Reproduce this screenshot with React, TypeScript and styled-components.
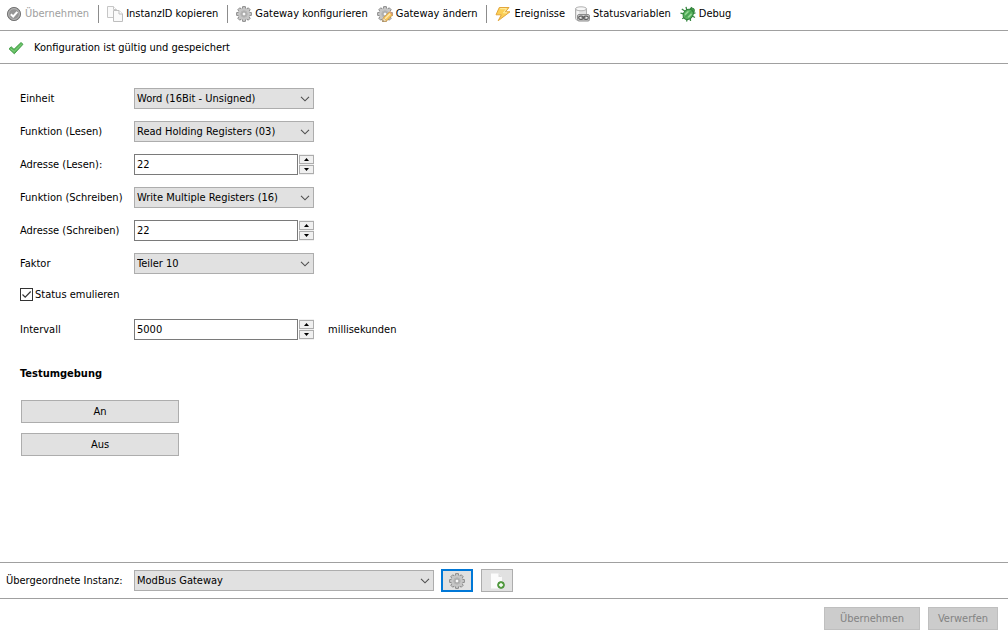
import React from "react";
import styled, { createGlobalStyle, css } from "styled-components";

const GlobalStyle = createGlobalStyle`
  *, *::before, *::after { box-sizing: border-box; }
  body {
    margin: 0;
    background: #ffffff;
    color: #000000;
  }
  body, button, input, select {
    font-family: "DejaVu Sans Condensed", Tahoma, sans-serif;
    font-size: 11px;
    line-height: 16px;
  }
`;

const Page = styled.div`
  display: flex;
  flex-direction: column;
  min-height: 100vh;
`;

const Toolbar = styled.nav`
  display: flex;
  align-items: center;
  gap: 9px;
  height: 31px;
  padding: 0 6px 2px;
  border-bottom: 1px solid #a0a0a0;
`;

const ToolButton = styled.button`
  display: flex;
  align-items: center;
  gap: 3px;
  padding: 0;
  border: 0;
  background: none;
  color: #000000;
  white-space: nowrap;

  &:disabled { color: #a0a0a0; }
  svg { flex: none; }
`;

const Divider = styled.span`
  width: 1px;
  height: 18px;
  margin-right: -1px;
  background: #8c8c8c;
`;

const StatusBar = styled.div`
  display: flex;
  align-items: center;
  gap: 10px;
  height: 33px;
  padding: 2px 8px 0;
  border-bottom: 1px solid #a0a0a0;
`;

const Form = styled.main`
  flex: 1;
  padding: 18px 20px;
`;

const Row = styled.div`
  display: flex;
  align-items: center;
  height: 33px;
`;

const RowLabel = styled.label`
  width: 114px;
  white-space: nowrap;
`;

const SelectBox = styled.span<{ $wide?: boolean }>`
  position: relative;
  display: flex;
  width: ${({ $wide }) => ($wide ? 300 : 180)}px;

  select {
    width: 100%;
    height: 21px;
    padding: 1px 22px 0 2px;
    border: 1px solid #adadad;
    border-radius: 0;
    background: #e1e1e1;
    color: #000000;
    line-height: 18px;
    appearance: none;
  }
  svg {
    position: absolute;
    top: 8px;
    right: 4px;
    pointer-events: none;
  }
`;

const NumberBox = styled.span`
  display: flex;
  gap: 1px;
  width: 180px;

  input {
    flex: 1;
    min-width: 0;
    height: 21px;
    padding: 0 2px;
    border: 1px solid #7a7a7a;
    background: #ffffff;
    color: #000000;
    appearance: textfield;
  }
  input::-webkit-inner-spin-button { appearance: none; }
`;

const Stepper = styled.span`
  display: flex;
  flex-direction: column;
  justify-content: center;
  gap: 1px;
  width: 15px;
  background: #f0f0f0;
`;

const StepButton = styled.button`
  display: flex;
  align-items: center;
  justify-content: center;
  height: 9px;
  padding: 0;
  border: 1px solid #adadad;
  background: #f0f0f0;
`;

const Unit = styled.span`
  margin-left: 14px;
`;

const CheckRow = styled.label`
  display: flex;
  align-items: center;
  gap: 2px;
  height: 33px;
  padding-bottom: 4px;
`;

const CheckMark = styled.span`
  position: relative;
  display: flex;

  input {
    width: 13px;
    height: 13px;
    margin: 0;
    border: 1px solid #333333;
    background: #ffffff;
    appearance: none;
  }
  svg {
    position: absolute;
    inset: 0;
    pointer-events: none;
    visibility: hidden;
  }
  input:checked + svg { visibility: visible; }
`;

const SectionTitle = styled.h2`
  margin: 20px 0 18px;
  font-size: 11px;
  line-height: 16px;
`;

const Actions = styled.div`
  display: flex;
  flex-direction: column;
  gap: 10px;
  padding-left: 1px;
`;

const pushButton = css`
  height: 23px;
  padding: 1px 0 0;
  border: 1px solid #adadad;
  background: #e1e1e1;
  color: #000000;

  &:disabled {
    border-color: #bfbfbf;
    background: #cccccc;
    color: #838383;
  }
`;

const PushButton = styled.button<{ $width: number }>`
  ${pushButton}
  width: ${({ $width }) => $width}px;
`;

const IconButton = styled.button<{ $focused?: boolean }>`
  ${pushButton}
  display: flex;
  align-items: center;
  justify-content: center;
  width: 32px;
  padding: 0;
  ${({ $focused }) => $focused && css`border: 2px solid #0078d7;`}
`;

const IconButtons = styled.div`
  display: flex;
  gap: 8px;
  margin-left: 7px;
`;

const ParentBar = styled.section`
  display: flex;
  align-items: center;
  height: 37px;
  padding: 0 6px;
  border-top: 1px solid #a0a0a0;
  border-bottom: 1px solid #a0a0a0;

  label {
    width: 128px;
    white-space: nowrap;
  }
`;

const Footer = styled.footer`
  display: flex;
  justify-content: flex-end;
  gap: 8px;
  padding: 8px 10px 7px;
`;

const CheckDiscIcon = () => (
  <svg width="16" height="16" viewBox="0 0 16 16" aria-hidden="true">
    <circle cx="8" cy="8" r="6.6" fill="#858585" stroke="#777777" />
    <circle cx="8" cy="8" r="5.4" fill="#959595" stroke="#c4c4c4" strokeWidth="0.8" />
    <path d="M4.8 8.2 7.2 10.5 11.3 5.9" fill="none" stroke="#ffffff" strokeWidth="2" />
  </svg>
);

const CopyIcon = () => (
  <svg width="16" height="16" viewBox="0 0 16 16" aria-hidden="true">
    <path d="M.5.5h6l3 3v8h-9z" fill="#fafafa" stroke="#c6c6c6" />
    <path d="M6.5.5v3h3" fill="#ffffff" stroke="#c6c6c6" />
    <path d="M6.5 4.5h5.5l3.5 3.5v7.5h-9z" fill="#fafafa" stroke="#bebebe" />
    <path d="M12 4.5v3.5h3.5" fill="#ffffff" stroke="#bebebe" />
  </svg>
);

const teeth = [0, 45, 90, 135, 180, 225, 270, 315];

const GearShape = () => (
  <g>
    {teeth.map((angle) => (
      <path
        key={angle}
        d="M6.2 4 6.6.6H9.4L9.800 4z"
        fill="#c6c6c6"
        stroke="#858585"
        strokeWidth="0.900"
        strokeLinejoin="round"
        transform={`rotate(${angle} 8 8)`}
      />
    ))}
    <circle cx="8" cy="8" r="3.800" fill="none" stroke="#c6c6c6" strokeWidth="3.800" />
    <circle cx="8" cy="8" r="3.200" fill="none" stroke="#a8a8a8" strokeWidth="0.700" />
    <circle cx="8" cy="8" r="2" fill="#f8f8f8" stroke="#8c8c8c" strokeWidth="0.800" />
  </g>
);

const GearIcon = () => (
  <svg width="16" height="16" viewBox="0 0 16 16" aria-hidden="true">
    <GearShape />
  </svg>
);

const GearEditIcon = () => (
  <svg width="16" height="16" viewBox="0 0 16 16" aria-hidden="true">
    <GearShape />
    <path d="M5.500 15.500 6.400 11.800 12.200 6.200 15.500 9 9.700 14.900z" fill="#f6c55c" stroke="#cf9438" strokeWidth="0.800" />
    <path d="M8 12.700 13.400 7.500" stroke="#fdeab0" strokeWidth="1.400" />
    <path d="M12.200 6.200 13.300 5.200 16 7.900 15.400 9z" fill="#e0a070" />
    <path d="M5.500 15.500 6.400 11.800 9.700 14.900z" fill="#f8e8c8" stroke="#c09450" strokeWidth="0.500" />
    <path d="M5.300 15.800 5.900 13.900 7.400 15.300z" fill="#777777" />
  </svg>
);

const BoltIcon = () => (
  <svg width="16" height="16" viewBox="0 0 16 16" aria-hidden="true">
    <path d="M4.300 1.500H14L10.500 5.800H15L3.200 14.700 6.300 8.800H1z" fill="#fbcf55" stroke="#e3a63c" strokeLinejoin="round" />
    <path d="M5.200 2.700h6.400L8.400 6.800h3.600" fill="none" stroke="#fff0a8" />
  </svg>
);

const DatabaseLinkIcon = () => (
  <svg width="16" height="16" viewBox="0 0 16 16" aria-hidden="true">
    <path d="M1.500 3v9.500c0 1.500 2.200 2 5.500 2s5.500-.5 5.500-2V3z" fill="#e2e2e2" stroke="#b0b0b0" />
    <path d="M4 5v8.500" stroke="#f6f6f6" strokeWidth="2.400" />
    <ellipse cx="7" cy="2.800" rx="5.500" ry="2" fill="#f8f8f8" stroke="#b0b0b0" />
    <rect x="3.500" y="8.500" width="12" height="6.500" rx="1.500" fill="#d8d8d8" stroke="#8c8c8c" />
    <rect x="4.700" y="10.200" width="4.600" height="3.200" rx="1.600" fill="#eeeeee" stroke="#5c5c5c" strokeWidth="1.200" />
    <rect x="9.700" y="10.200" width="4.600" height="3.200" rx="1.600" fill="#eeeeee" stroke="#5c5c5c" strokeWidth="1.200" />
    <path d="M7.500 11.800h4" stroke="#5c5c5c" strokeWidth="1.200" />
  </svg>
);

const BugIcon = () => (
  <svg width="16" height="16" viewBox="0 0 16 16" aria-hidden="true">
    <path
      d="M6 .8 6.800 4M1.800 3 5.500 5.500M.5 7.200 4.500 8M2.200 12.800 5.500 10.800M6.500 15.500 7.500 12.500M10.500 15 10.300 12M15 11.500 12.200 10M15.500 6.800 12.500 7.500M10.800 4.500 11.500 1"
      fill="none"
      stroke="#3a8a44"
      strokeWidth="1.300"
    />
    <circle cx="12" cy="4.500" r="2.500" fill="#449c4d" stroke="#2f7d39" strokeWidth="0.800" />
    <ellipse cx="8.200" cy="8.400" rx="5.600" ry="4.600" transform="rotate(-45 8.200 8.400)" fill="#5ab560" stroke="#2f8039" />
    <path d="M5 11.500 11.600 4.900" stroke="#3a9045" strokeWidth="0.900" />
    <path d="M5 8.700 8.400 5.300M8.200 11.300 11.500 8" stroke="#a2dea0" strokeWidth="1.200" />
  </svg>
);

const GreenCheckIcon = () => (
  <svg width="16" height="16" viewBox="0 0 16 16" aria-hidden="true">
    <path d="M1 8.800 3.200 6.800 6 9.300 13 2.500 15 4.300 6.300 13.800z" fill="#5ab95a" stroke="#3f9a44" strokeWidth="0.900" strokeLinejoin="round" />
    <path d="M2.500 8.800 6.200 11.400 13.700 4" fill="none" stroke="#8ad384" strokeWidth="0.900" />
  </svg>
);

const PageAddIcon = () => (
  <svg width="16" height="16" viewBox="0 0 16 16" aria-hidden="true">
    <path d="M2 .5h7.500l3.500 3.500V15.500H2z" fill="#fbfbfb" />
    <path d="M9.500.5v3.500H13z" fill="#dcdcdc" />
    <circle cx="12" cy="12" r="3.400" fill="#5aa545" stroke="#418733" strokeWidth="0.800" />
    <path d="M12 10v4M10 12h4" stroke="#ffffff" strokeWidth="1.400" />
  </svg>
);

const ChevronIcon = () => (
  <svg width="10" height="6" viewBox="0 0 10 6" aria-hidden="true">
    <path d="M1 .8 5 4.800 9 .8" fill="none" stroke="#505050" strokeWidth="1.100" />
  </svg>
);

const ArrowIcon = ({ down }: { down?: boolean }) => (
  <svg width="5" height="3" viewBox="0 0 5 3" aria-hidden="true">
    <path d={down ? "M0 0H5L2.500 3z" : "M0 3H5L2.500 0z"} fill="#000000" />
  </svg>
);

interface SelectProps {
  id: string;
  value: string;
  wide?: boolean;
}

const Select = ({ id, value, wide }: SelectProps) => (
  <SelectBox $wide={wide}>
    <select id={id} defaultValue={value}>
      <option>{value}</option>
    </select>
    <ChevronIcon />
  </SelectBox>
);

const SelectRow = ({ id, label, value }: { id: string; label: string; value: string }) => (
  <Row>
    <RowLabel htmlFor={id}>{label}</RowLabel>
    <Select id={id} value={value} />
  </Row>
);

interface NumberRowProps {
  id: string;
  label: string;
  initial: number;
  unit?: string;
}

const NumberRow = ({ id, label, initial, unit }: NumberRowProps) => {
  const [value, setValue] = React.useState(initial);
  return (
    <Row>
      <RowLabel htmlFor={id}>{label}</RowLabel>
      <NumberBox>
        <input id={id} type="number" value={value} onChange={(e) => setValue(Number(e.target.value))} />
        <Stepper>
          <StepButton type="button" aria-label={`${label} +`} onClick={() => setValue(value + 1)}>
            <ArrowIcon />
          </StepButton>
          <StepButton type="button" aria-label={`${label} -`} onClick={() => setValue(value - 1)}>
            <ArrowIcon down />
          </StepButton>
        </Stepper>
      </NumberBox>
      {unit && <Unit>{unit}</Unit>}
    </Row>
  );
};

export default function App() {
  return (
    <Page>
      <GlobalStyle />
      <Toolbar>
        <ToolButton disabled><CheckDiscIcon />Übernehmen</ToolButton>
        <Divider />
        <ToolButton><CopyIcon />InstanzID kopieren</ToolButton>
        <Divider />
        <ToolButton><GearIcon />Gateway konfigurieren</ToolButton>
        <ToolButton><GearEditIcon />Gateway ändern</ToolButton>
        <Divider />
        <ToolButton><BoltIcon />Ereignisse</ToolButton>
        <ToolButton><DatabaseLinkIcon />Statusvariablen</ToolButton>
        <ToolButton><BugIcon />Debug</ToolButton>
      </Toolbar>
      <StatusBar role="status">
        <GreenCheckIcon />
        Konfiguration ist gültig und gespeichert
      </StatusBar>
      <Form>
        <SelectRow id="unit" label="Einheit" value="Word (16Bit - Unsigned)" />
        <SelectRow id="readFunction" label="Funktion (Lesen)" value="Read Holding Registers (03)" />
        <NumberRow id="readAddress" label="Adresse (Lesen):" initial={22} />
        <SelectRow id="writeFunction" label="Funktion (Schreiben)" value="Write Multiple Registers (16)" />
        <NumberRow id="writeAddress" label="Adresse (Schreiben)" initial={22} />
        <SelectRow id="factor" label="Faktor" value="Teiler 10" />
        <CheckRow>
          <CheckMark>
            <input type="checkbox" defaultChecked />
            <svg width="13" height="13" viewBox="0 0 13 13" aria-hidden="true">
              <path d="M2.500 6.500 5.200 9.200 10.700 3.500" fill="none" stroke="#333333" strokeWidth="1.200" />
            </svg>
          </CheckMark>
          Status emulieren
        </CheckRow>
        <NumberRow id="interval" label="Intervall" initial={5000} unit="millisekunden" />
        <SectionTitle>Testumgebung</SectionTitle>
        <Actions>
          <PushButton $width={158}>An</PushButton>
          <PushButton $width={158}>Aus</PushButton>
        </Actions>
      </Form>
      <ParentBar>
        <label htmlFor="parent">Übergeordnete Instanz:</label>
        <Select id="parent" value="ModBus Gateway" wide />
        <IconButtons>
          <IconButton $focused aria-label="Instanz konfigurieren"><GearIcon /></IconButton>
          <IconButton aria-label="Instanz hinzufügen"><PageAddIcon /></IconButton>
        </IconButtons>
      </ParentBar>
      <Footer>
        <PushButton $width={96} disabled>Übernehmen</PushButton>
        <PushButton $width={70} disabled>Verwerfen</PushButton>
      </Footer>
    </Page>
  );
}
